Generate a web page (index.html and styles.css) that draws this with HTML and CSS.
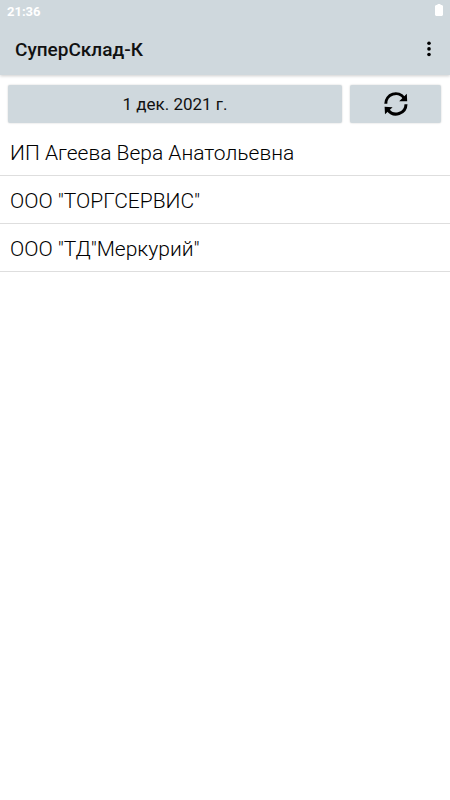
FILE: index.html
```html
<!DOCTYPE html>
<html lang="ru">
<head>
<meta charset="utf-8">
<meta name="viewport" content="width=device-width, initial-scale=1">
<title>СуперСклад-К</title>
<link rel="stylesheet" href="styles.css">
</head>
<body>
<header class="top">
  <div class="status">
    <span>21:36</span>
    <svg class="battery" viewBox="0 0 8 12" aria-hidden="true"><path d="M2.500 0h3v1H7l1 1v9l-1 1H1l-1-1V2l1-1h1.500z"/></svg>
  </div>
  <div class="appbar">
    <h1 class="title">СуперСклад-К</h1>
    <button class="menu" type="button" aria-label="Меню">
      <svg class="dots" viewBox="0 0 4 16" aria-hidden="true"><circle cx="2" cy="2.300" r="1.800"/><circle cx="2" cy="7.900" r="1.800"/><circle cx="2" cy="13.500" r="1.800"/></svg>
    </button>
  </div>
</header>
<main>
  <div class="toolbar">
    <button class="btn date" type="button">1 дек. 2021 г.</button>
    <button class="btn refresh" type="button" aria-label="Обновить">
      <svg class="sync" viewBox="0 0 24 24" aria-hidden="true">
        <path class="arc" d="M1.800 11.800A10 10 0 0 1 20 6M22 12.200A10 10 0 0 1 4 18"/>
        <path d="M22.800 1.800L23.200 9.300H15.200zM1 22.200L.6 14.700L8.600 15.200z"/>
      </svg>
    </button>
  </div>
  <ul class="list">
    <li class="row">ИП Агеева Вера Анатольевна</li>
    <li class="row">ООО "ТОРГСЕРВИС"</li>
    <li class="row">ООО "ТД"Меркурий"</li>
  </ul>
</main>
</body>
</html>
```
FILE: styles.css
```css
* {
  box-sizing: border-box;
}

body {
  margin: 0;
  background: #fff;
  color: #000;
  font-family: Roboto, "Liberation Sans", sans-serif;
}

.top {
  background: #cfd8dd;
  box-shadow: 0 1px 3px rgba(0, 0, 0, 0.2);
}

.status {
  display: flex;
  justify-content: space-between;
  align-items: center;
  height: 24px;
  padding: 0 7px;
  color: #fff;
  font-size: 13px;
  font-weight: 700;
  line-height: 24px;
}

.battery {
  width: 8px;
  height: 12px;
  margin-bottom: 4px;
  fill: #fff;
}

.appbar {
  display: flex;
  justify-content: space-between;
  align-items: center;
  height: 51px;
  padding: 0 9px 0 15px;
}

.title {
  margin: 0;
  color: #111;
  font-size: 19px;
  font-weight: 500;
  line-height: 24px;
}

.menu {
  display: flex;
  justify-content: center;
  align-items: center;
  width: 24px;
  height: 32px;
  padding: 0;
  border: 0;
  background: none;
}

.dots {
  width: 4px;
  height: 16px;
  margin-bottom: 2px;
}

.toolbar {
  display: flex;
  gap: 8px;
  padding: 10px 9px 5px 8px;
}

.btn {
  display: flex;
  justify-content: center;
  align-items: center;
  height: 38px;
  padding: 0;
  border: 0;
  border-radius: 2px;
  background: #cfd8dd;
  box-shadow: 0 0 2px rgba(0, 0, 0, 0.2);
  color: #111;
  font: 400 17px/24px Roboto, "Liberation Sans", sans-serif;
}

.date {
  flex: 1;
}

.refresh {
  width: 91px;
}

.sync {
  width: 24px;
  height: 24px;
}

.arc {
  fill: none;
  stroke: #000;
  stroke-width: 3;
}

.list {
  margin: 0;
  padding: 0;
  list-style: none;
}

.row {
  padding: 12px 10px 8px;
  border-bottom: 1px solid #dedede;
  font-size: 21px;
  font-weight: 300;
  line-height: 27px;
}
```
